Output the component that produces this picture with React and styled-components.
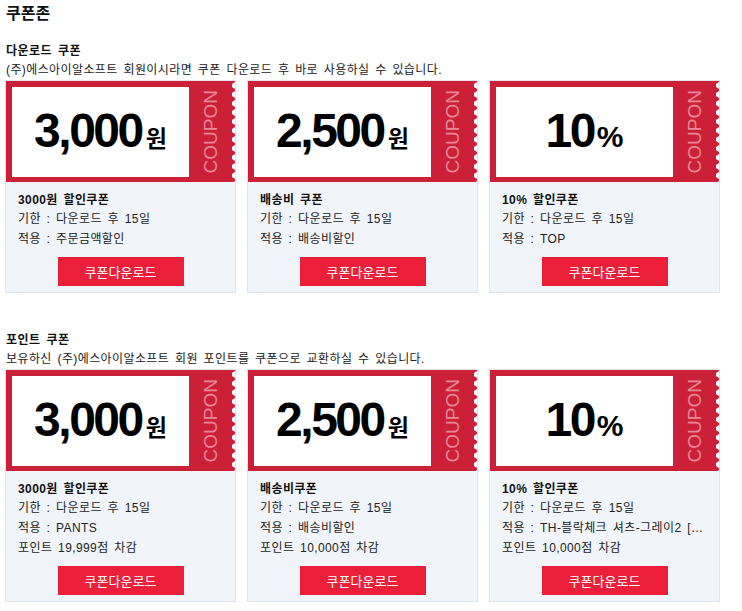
import React from 'react'
import styled, { createGlobalStyle } from 'styled-components'

const GlobalStyle = createGlobalStyle`
body {
  margin: 0;
  background: #fff;
  font-family: "Liberation Sans", "Noto Sans CJK KR", sans-serif;
  color: #222;
}
`

const Page = styled.div`
  padding: 4px 5px 0 5px;
`

const Heading = styled.h2`
  margin: 0 0 0 1px;
  font-size: 16px;
  font-weight: bold;
  line-height: 20px;
  color: #111;
`

const Section = styled.section`
  margin-top: ${(p) => p.$top}px;
`

const SectionTitle = styled.h3`
  margin: 0 0 0 1px;
  font-size: 12px;
  font-weight: bold;
  line-height: 18px;
  letter-spacing: 0.5px;
  word-spacing: 2px;
  color: #111;
`

const Desc = styled.p`
  margin: 0 0 0 1px;
  font-size: 12px;
  line-height: 20px;
  letter-spacing: 0.4px;
  word-spacing: 2px;
  color: #222;
`

const Grid = styled.div`
  display: grid;
  grid-template-columns: repeat(3, 231px);
  column-gap: 11px;
`

const Card = styled.div`
  border: 1px solid #dfe4ea;
  background: #f1f5f9;
`

const Art = styled.div`
  display: flex;
  height: 101px;
  background: #cc2038;
`

const Face = styled.div`
  flex: 0 0 177px;
  margin: 6px 0 5px 6px;
  background: #fff;
  display: flex;
  align-items: baseline;
  justify-content: center;
  padding-top: 20px;
  box-sizing: border-box;
  color: #000;
`

const Amount = styled.span`
  font-size: 48px;
  font-weight: bold;
  letter-spacing: -2.5px;
  line-height: 1;
`

const Unit = styled.span`
  font-size: ${(p) => (p.$percent ? 30 : 23)}px;
  font-weight: bold;
  margin-left: ${(p) => (p.$percent ? 3 : 4)}px;
  font-family: ${(p) => (p.$percent ? '"Liberation Sans", sans-serif' : '"Noto Sans CJK KR", sans-serif')};
`

const Strip = styled.div`
  flex: 1;
  min-width: 0;
  display: flex;
  align-items: center;
  justify-content: center;
`

const CouponWord = styled.div`
  writing-mode: vertical-rl;
  transform: rotate(180deg);
  font-size: 19px;
  line-height: 1;
  color: #e88896;
  white-space: nowrap;
`

const Perf = styled.div`
  flex: 0 0 4px;
  background: radial-gradient(circle at 100% 50%, #fff 2.8px, transparent 3.4px) 0 0 / 4px 9px repeat-y;
`

const Info = styled.div`
  padding: 9px 12px 6px 12px;
  font-size: 12px;
  line-height: 20px;
  letter-spacing: 0.4px;
  word-spacing: 2px;
  color: #222;
`

const Name = styled.div`
  font-weight: bold;
  line-height: 18px;
  color: #111;
`

const Row = styled.div`
  white-space: nowrap;
  overflow: hidden;
  text-overflow: ellipsis;
`

const Button = styled.button`
  display: block;
  width: 126px;
  height: 29px;
  margin: 8px auto 0;
  padding: 0;
  border: 0;
  background: #ec1f3a;
  color: #fff;
  font-family: "Noto Sans CJK KR", sans-serif;
  font-size: 13px;
  cursor: pointer;
`

const downloads = [
  { amount: '3,000', unit: '원', name: '3000원 할인쿠폰', use: '주문금액할인' },
  { amount: '2,500', unit: '원', name: '배송비 쿠폰', use: '배송비할인' },
  { amount: '10', unit: '%', name: '10% 할인쿠폰', use: 'TOP' },
]

const points = [
  { amount: '3,000', unit: '원', name: '3000원 할인쿠폰', use: 'PANTS', point: '19,999' },
  { amount: '2,500', unit: '원', name: '배송비쿠폰', use: '배송비할인', point: '10,000' },
  { amount: '10', unit: '%', name: '10% 할인쿠폰', use: 'TH-블락체크 셔츠-그레이2 [옵션]', point: '10,000' },
]

const Coupon = ({ item }) => (
  <Card>
    <Art>
      <Face>
        <Amount>{item.amount}</Amount>
        <Unit $percent={item.unit === '%'}>{item.unit}</Unit>
      </Face>
      <Strip>
        <CouponWord>COUPON</CouponWord>
      </Strip>
      <Perf />
    </Art>
    <Info>
      <Name>{item.name}</Name>
      <Row>기한 : 다운로드 후 15일</Row>
      <Row>적용 : {item.use}</Row>
      {item.point && <Row>포인트 {item.point}점 차감</Row>}
      <Button>쿠폰다운로드</Button>
    </Info>
  </Card>
)

export default function App() {
  return (
    <Page>
      <GlobalStyle />
      <Heading>쿠폰존</Heading>
      <Section $top={18}>
        <SectionTitle>다운로드 쿠폰</SectionTitle>
        <Desc>(주)에스아이알소프트 회원이시라면 쿠폰 다운로드 후 바로 사용하실 수 있습니다.</Desc>
        <Grid>
          {downloads.map((c, i) => (
            <Coupon key={i} item={c} />
          ))}
        </Grid>
      </Section>
      <Section $top={38}>
        <SectionTitle>포인트 쿠폰</SectionTitle>
        <Desc>보유하신 (주)에스아이알소프트 회원 포인트를 쿠폰으로 교환하실 수 있습니다.</Desc>
        <Grid>
          {points.map((c, i) => (
            <Coupon key={i} item={c} />
          ))}
        </Grid>
      </Section>
    </Page>
  )
}
